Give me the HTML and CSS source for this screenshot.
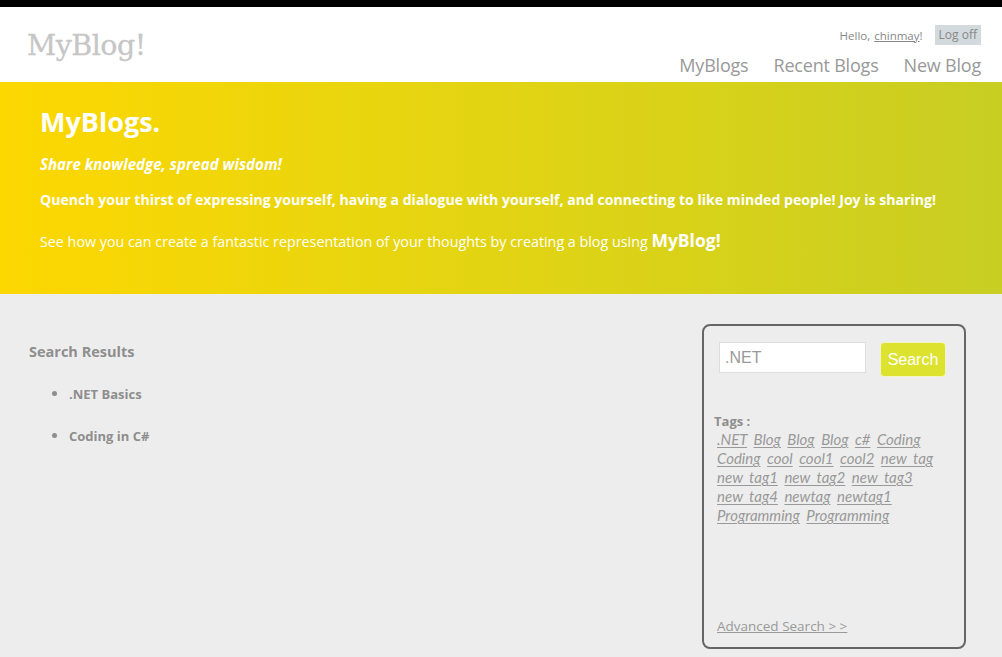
FILE: index.html
```html
<!DOCTYPE html>
<html>
<head>
<meta charset="utf-8">
<title>MyBlog</title>
<link rel="stylesheet" href="styles.css">
</head>
<body>
<header class="site-header">
  <div class="logo">MyBlog!</div>
  <div class="header-right">
    <div class="login">Hello, <a class="user" href="#">chinmay</a>! <a class="logoff" href="#">Log off</a></div>
    <nav class="menu">
      <a href="#">MyBlogs</a>
      <a href="#">Recent Blogs</a>
      <a href="#">New Blog</a>
    </nav>
  </div>
</header>
<section class="hero">
  <h1>MyBlogs.</h1>
  <p class="tagline">Share knowledge, spread wisdom!</p>
  <p class="quench">Quench your thirst of expressing yourself, having a dialogue with yourself, and connecting to like minded people! Joy is sharing!</p>
  <p class="see">See how you can create a fantastic representation of your thoughts by creating a blog using <b>MyBlog!</b></p>
</section>
<main class="content">
  <div class="results">
    <h2>Search Results</h2>
    <ul>
      <li>.NET Basics</li>
      <li>Coding in C#</li>
    </ul>
  </div>
  <aside class="sidebox">
    <div class="search-row">
      <input class="search-input" type="text" value=".NET">
      <button class="search-btn">Search</button>
    </div>
    <div class="tags">
      <div class="tags-title">Tags :</div>
      <div class="tag-list">
        <a href="#">.NET</a> <a href="#">Blog</a> <a href="#">Blog</a> <a href="#">Blog</a> <a href="#">c#</a> <a href="#">Coding</a>
        <a href="#">Coding</a> <a href="#">cool</a> <a href="#">cool1</a> <a href="#">cool2</a> <a href="#">new tag</a>
        <a href="#">new tag1</a> <a href="#">new tag2</a> <a href="#">new tag3</a>
        <a href="#">new tag4</a> <a href="#">newtag</a> <a href="#">newtag1</a>
        <a href="#">Programming</a> <a href="#">Programming</a>
      </div>
    </div>
    <a class="advanced" href="#">Advanced Search &gt; &gt;</a>
  </aside>
</main>
</body>
</html>
```
FILE: styles.css
```css
html, body {
  margin: 0;
  padding: 0;
}
body {
  background: #ededed;
  font-family: "Open Sans", "Noto Sans", sans-serif;
  color: #999;
  height: 657px;
  overflow: hidden;
}
.site-header {
  border-top: 7px solid #000;
  background: #fff;
  height: 75px;
  display: flex;
  justify-content: space-between;
  padding: 0 21px 0 27px;
  box-sizing: content-box;
}
.logo {
  font-family: "DejaVu Serif", serif;
  font-size: 28.5px;
  color: #c6c6c6;
  padding-top: 22px;
  letter-spacing: -0.5px;
  -webkit-text-stroke: 0.3px #c6c6c6;
}
.header-right {
  display: flex;
  flex-direction: column;
  align-items: flex-end;
}
.login {
  margin-top: 18px;
  font-size: 11.5px;
  color: #888;
  display: flex;
  align-items: center;
}
.login .user {
  color: #888;
  margin-left: 4px;
}
.logoff {
  display: inline-block;
  background: #d3dadd;
  color: #888;
  text-decoration: none;
  padding: 1px 4px 2px;
  margin-left: 12px;
  font-size: 12px;
}
.menu {
  margin-top: 8px;
  display: flex;
  gap: 25px;
}
.menu a {
  font-size: 18px;
  color: #999;
  text-decoration: none;
  letter-spacing: -0.2px;
}
.hero {
  background: linear-gradient(to right, #fdd700 0%, #e7d510 40%, #c8ce23 100%);
  height: 212px;
  padding: 0 40px;
  color: #fff;
  box-sizing: border-box;
  padding-top: 20px;
}
.hero h1 {
  margin: 0;
  font-size: 27px;
  font-weight: 700;
  line-height: 40px;
}
.hero p {
  margin: 0;
  font-size: 14px;
}
.tagline {
  font-style: italic;
  font-weight: 700;
  margin-top: 11px !important;
  line-height: 22px;
  font-size: 15.1px !important;
}
.quench {
  font-weight: 700;
  margin-top: 14px !important;
  line-height: 22px;
  font-size: 14.1px !important;
}
.see {
  margin-top: 17px !important;
  line-height: 24px;
  font-size: 14.3px !important;
}
.see b {
  font-size: 17.5px;
}
.content {
  display: flex;
  justify-content: space-between;
  padding: 30px 36px 0 29px;
}
.results h2 {
  margin: 18px 0 0;
  font-size: 14.5px;
  font-weight: 700;
  color: #8e8e8e;
}
.results ul {
  margin: 23px 0 0;
  padding-left: 40px;
  font-size: 13px;
  font-weight: 700;
  color: #8e8e8e;
  list-style: disc;
}
.results li {
  line-height: 19px;
  margin-bottom: 22px;
}
.results li::marker {
  font-size: 14px;
}
.sidebox {
  width: 260px;
  height: 321px;
  border: 2px solid #666;
  border-radius: 8px;
  box-sizing: content-box;
  display: flex;
  flex-direction: column;
  padding: 0;
}
.search-row {
  display: flex;
  align-items: flex-start;
  padding: 16px 0 0 15px;
  gap: 14px;
}
.search-input {
  width: 147px;
  height: 31px;
  box-sizing: border-box;
  border: 1px solid #ddd;
  background: #fff;
  font-family: "Liberation Sans", Arial, sans-serif;
  font-size: 16px;
  color: #999;
  padding: 0 5px;
  margin: 0;
  outline: none;
}
.search-btn {
  width: 66px;
  height: 35px;
  background: #dde22e;
  border: 1px solid #f4f6c0;
  border-radius: 4px;
  color: #fff;
  font-family: "Liberation Sans", Arial, sans-serif;
  font-size: 16px;
  padding: 0;
  margin: 0;
}
.tags {
  padding: 35px 22px 0 10px;
}
.tags-title {
  font-size: 13px;
  font-weight: 700;
  color: #8e8e8e;
  line-height: 18px;
}
.tag-list {
  padding-left: 3px;
  font-family: "Lato", "Open Sans", sans-serif;
  font-style: italic;
  font-size: 15px;
  line-height: 19px;
  word-spacing: 3px;
}
.tag-list a {
  color: #999;
  text-decoration: underline;
  text-underline-offset: 2px;
}
.advanced {
  margin-top: auto;
  margin-left: 13px;
  margin-bottom: 12px;
  font-size: 13.5px;
  color: #999;
  text-decoration: underline;
  align-self: flex-start;
}
```
